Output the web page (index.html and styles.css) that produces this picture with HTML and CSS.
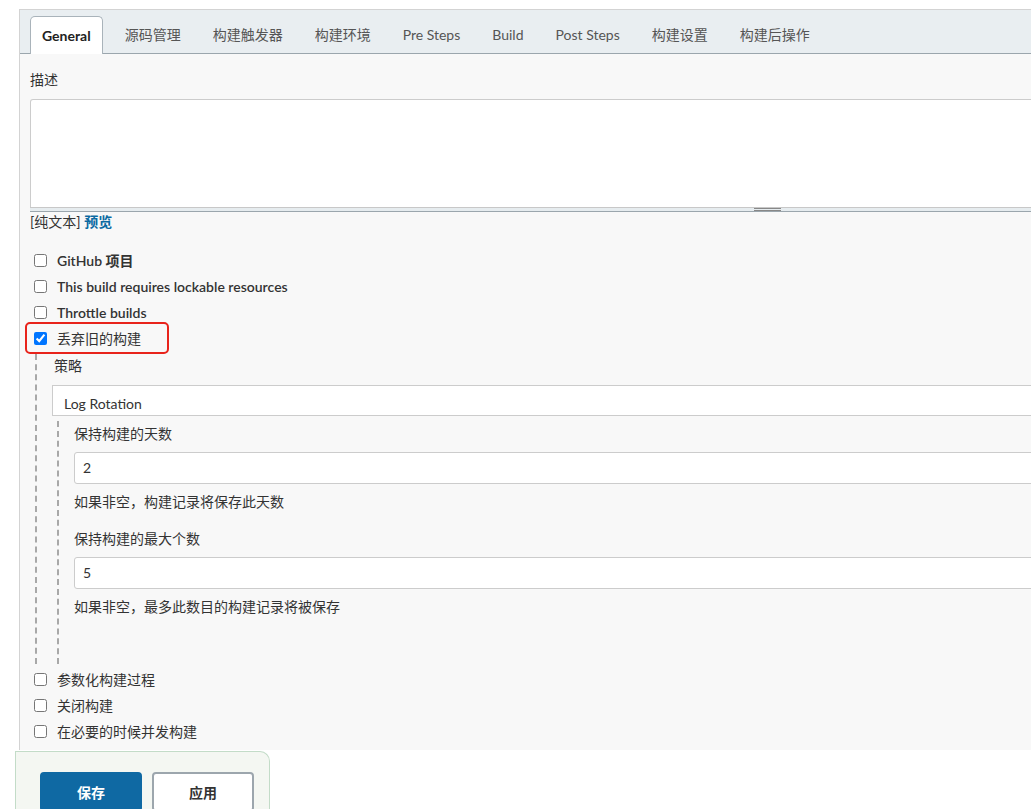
FILE: index.html
```html
<!DOCTYPE html>
<html lang="zh-CN">
<head>
    <meta charset="UTF-8">
    <title>配置</title>
    <link rel="stylesheet" href="styles.css">
</head>
<body>
    <div class="page">
        <div class="config">
            <div class="tabbar">
                <div class="tab active">General</div>
                <div class="tab">源码管理</div>
                <div class="tab">构建触发器</div>
                <div class="tab">构建环境</div>
                <div class="tab">Pre Steps</div>
                <div class="tab">Build</div>
                <div class="tab">Post Steps</div>
                <div class="tab">构建设置</div>
                <div class="tab">构建后操作</div>
            </div>
            <div class="section">
                <div class="label">描述</div>
                <div class="textarea"></div>
                <div class="handle"><span class="grip"></span></div>
                <div class="preview">[纯文本] <a class="link">预览</a></div>

                <div class="checks">
                    <label class="check strong"><input type="checkbox"> GitHub 项目</label>
                    <label class="check strong"><input type="checkbox"> This build requires lockable resources</label>
                    <label class="check strong"><input type="checkbox"> Throttle builds</label>
                    <label class="check marked"><input type="checkbox" checked> 丢弃旧的构建</label>
                </div>

                <div class="nested">
                    <div class="label">策略</div>
                    <div class="select"><span>Log Rotation</span></div>
                    <div class="nested inner">
                        <div class="label">保持构建的天数</div>
                        <div class="input">2</div>
                        <div class="help">如果非空，构建记录将保存此天数</div>
                        <div class="label">保持构建的最大个数</div>
                        <div class="input">5</div>
                        <div class="help">如果非空，最多此数目的构建记录将被保存</div>
                    </div>
                </div>

                <div class="checks after">
                    <label class="check"><input type="checkbox"> 参数化构建过程</label>
                    <label class="check"><input type="checkbox"> 关闭构建</label>
                    <label class="check"><input type="checkbox"> 在必要的时候并发构建</label>
                </div>
            </div>
        </div>
        <div class="bottom-bar">
            <button class="btn primary">保存</button>
            <button class="btn">应用</button>
        </div>
    </div>
</body>
</html>
```

FILE: styles.css
```css
html, body {
    overflow: hidden;
}
body {
    margin: 0;
    background: #fff;
    color: #333;
    font-family: Lato, "Noto Sans CJK SC", sans-serif;
    font-size: 14px;
}
.page {
    padding: 9px 0 0 15px;
    width: 1500px;
}
.config {
    margin-left: 4px;
    border-left: 1px solid #d3d3d3;
    border-top: 1px solid #d3d3d3;
    background: #f8f8f8;
}
.tabbar {
    display: flex;
    gap: 8px;
    height: 37px;
    padding: 6px 10px 0;
    background: #e9eef1;
    border-bottom: 1px solid #9ba6ad;
}
.tab {
    padding: 0 12px;
    line-height: 37px;
    color: #555;
    white-space: nowrap;
}
.tab.active {
    padding: 0 11px;
    margin-right: 2px;
    background: #fff;
    color: #222;
    font-weight: bold;
    border: 1px solid #a9b3ba;
    border-bottom: none;
    border-radius: 5px 5px 0 0;
    margin-bottom: -1px;
}
.section {
    padding: 16px 10px 6px;
}
.label {
    line-height: 20px;
}
.textarea {
    margin-top: 9px;
    height: 107px;
    background: #fff;
    border: 1px solid #ccc;
    border-bottom: none;
    border-radius: 3px 3px 0 0;
}
.handle {
    height: 3px;
    background: #e6ecef;
    border-top: 1px solid #c8c8c8;
    border-bottom: 1px solid #9ba6ad;
    display: flex;
    justify-content: center;
}
.grip {
    width: 27px;
    height: 1px;
    border-top: 1px solid #888;
    border-bottom: 1px solid #888;
}
.preview {
    line-height: 20px;
}
.link {
    color: #0b6aa2;
    font-weight: bold;
}
.checks {
    margin-top: 15px;
}
.check {
    display: flex;
    align-items: center;
    height: 26px;
    width: max-content;
}
.check input {
    margin: 0 10px 0 4px;
    width: 13px;
    height: 13px;
}
.check.strong {
    font-weight: 600;
}
.check.marked {
    outline: 2px solid #e8231b;
    border-radius: 3px;
    margin-left: -3px;
    padding: 0 26px 0 3px;
    height: 28px;
    margin-top: -1px;
    margin-bottom: -1px;
}
.nested {
    margin: 3px 0 0 5px;
    padding: 2px 0 0 17px;
    border-left: 2px dashed #a8a8a8;
}
.select {
    margin: 9px 0 5px -2px;
    height: 29px;
    background: #fff;
    border: 1px solid #ccc;
    padding-left: 11px;
    overflow: hidden;
}
.select span {
    display: block;
    height: 20px;
    padding-top: 5px;
    line-height: 26px;
    overflow: hidden;
}
.inner {
    margin: 0 0 0 3px;
    padding: 3px 0 30px 15px;
}
.input {
    margin-top: 8px;
    height: 30px;
    line-height: 30px;
    padding-left: 8px;
    background: #fff;
    border: 1px solid #ccc;
    border-radius: 3px;
}
.help {
    margin: 8px 0 17px;
    line-height: 20px;
}
.after {
    margin-top: 2px;
}
.bottom-bar {
    display: flex;
    gap: 10px;
    width: 214px;
    padding: 20px 15px 0 24px;
    margin-top: 1px;
    height: 60px;
    background: #f4f7f2;
    border: 1px solid #c3dcc8;
    border-bottom: none;
    border-radius: 0 10px 0 0;
}
.btn {
    width: 103px;
    height: 40px;
    border-radius: 4px;
    font-family: inherit;
    font-size: 14px;
    font-weight: bold;
    color: #333;
    background: #fff;
    border: 2px solid #9ca6ad;
}
.btn.primary {
    color: #fff;
    background: #0f69a3;
    border-color: #0f69a3;
}
```
